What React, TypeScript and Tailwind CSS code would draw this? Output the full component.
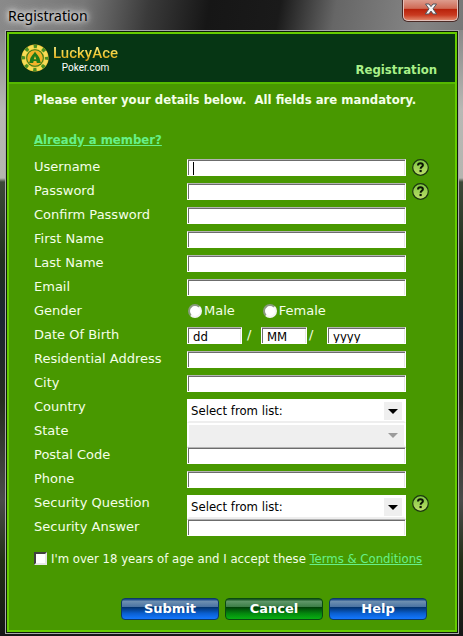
import { useState } from 'react'
import type { ReactNode } from 'react'
import clsx from 'clsx'

const fieldBase = 'block h-[17px] min-w-0 border border-white border-t-[#b4b4b4] bg-white text-black shadow-[inset_1px_1px_0_#6c6c6c,inset_-1px_0_0_#e6e6e6] outline-none'

function HelpButton({ topic }: { topic: string }) {
  return (
    <button type="button" aria-label={`Help: ${topic}`} className="block h-[17px] w-[17px]">
      <svg viewBox="0 0 17 17" className="block h-full w-full">
        <defs>
          <linearGradient id={`help-${topic}`} x1="0" y1="0" x2="0" y2="1">
            <stop offset="0" stopColor="#7cc440" />
            <stop offset="1" stopColor="#bfe06a" />
          </linearGradient>
        </defs>
        <circle cx="8.5" cy="8.5" r="7.8" fill={`url(#help-${topic})`} stroke="#1b3510" strokeWidth="1.2" />
        <path d="M6 6.6C6 4.9 7 4.3 8.5 4.3C10.1 4.3 10.9 5 10.9 6.2C10.9 7.8 8.6 7.8 8.6 9.8" fill="none" stroke="#0a1403" strokeWidth="2" />
        <rect x="7.5" y="10.9" width="2.2" height="2.2" fill="#0a1403" />
      </svg>
    </button>
  )
}

function Row({ label, id, help, children }: { label: string; id?: string; help?: string; children: ReactNode }) {
  return (
    <div className="grid h-6 grid-cols-[153px_1fr_24px]">
      {id ? <label htmlFor={id} className="leading-4">{label}</label> : <span className="leading-4">{label}</span>}
      <div className="min-w-0">{children}</div>
      <div className="flex justify-end pr-px">{help && <HelpButton topic={help} />}</div>
    </div>
  )
}

function TextRow({ label, id, type = 'text', help }: { label: string; id: string; type?: string; help?: string }) {
  return (
    <Row label={label} id={id} help={help}>
      <input id={id} type={type} className={clsx(fieldBase, 'w-full px-1')} />
    </Row>
  )
}

function ListBox({ id, disabled = false }: { id: string; disabled?: boolean }) {
  return (
    <div className="relative">
      <select
        id={id}
        disabled={disabled}
        className={clsx(
          'block h-6 w-full appearance-none border-2 border-white border-b-[#eeeeee] pl-[2px] font-["DejaVu_Sans_Condensed","DejaVu_Sans",sans-serif] text-[13px] leading-5 text-black opacity-100 outline-none',
          disabled ? 'bg-[#efefef]' : 'bg-white'
        )}
      >
        <option>{disabled ? '' : 'Select from list:'}</option>
      </select>
      <span className="pointer-events-none absolute top-[3px] right-1 flex h-[18px] w-[18px] items-center justify-center bg-[#efefef]">
        <svg viewBox="0 0 10 5" className="h-[5px] w-[10px]">
          <path d="M0 0H10L5 5Z" fill={disabled ? '#9b9b9b' : '#000000'} />
        </svg>
      </span>
    </div>
  )
}

function Chip() {
  return (
    <svg viewBox="0 0 28 28" className="h-7 w-7">
      <circle cx="14" cy="14" r="13.6" fill="#e2b32c" />
      <circle cx="14" cy="14" r="11.2" fill="none" stroke="#f6dc55" strokeWidth="3.8" />
      {/* eight green edge marks */}
      <circle cx="14" cy="14" r="11.6" fill="none" stroke="#4b8f22" strokeWidth="3.4" strokeDasharray="3.4 5.711" strokeDashoffset="1.7" />
      <circle cx="14" cy="14" r="8.8" fill="#2c7d1b" />
      <circle cx="14" cy="14" r="7.8" fill="#f3b32a" />
      <path d="M14 7.6C15.2 10.2 19 13 19 16.2L19.8 19H15.9L15.3 17H12.7L12.1 19H8.2L9 16.2C9 13 12.8 10.2 14 7.6Z" fill="#1f7a18" />
      <path d="M14 12L15.2 15.2H12.8Z" fill="#f4c63c" />
    </svg>
  )
}

const buttons = [
  { label: 'Submit', blue: true },
  { label: 'Cancel', blue: false },
  { label: 'Help', blue: true },
]

const textRows = [
  { label: 'Username', id: 'username', help: 'username' },
  { label: 'Password', id: 'password', type: 'password', help: 'password' },
  { label: 'Confirm Password', id: 'confirm', type: 'password' },
  { label: 'First Name', id: 'first-name' },
  { label: 'Last Name', id: 'last-name' },
  { label: 'Email', id: 'email' },
]

const radioClass = 'h-[14px] w-[14px] appearance-none rounded-full border-2 border-t-[#8a9a80] border-l-[#8a9a80] border-r-[#f4f4f4] border-b-[#f4f4f4] bg-white checked:bg-black'
const dateClass = 'px-[5px] pt-[2px] font-["DejaVu_Sans_Condensed","DejaVu_Sans",sans-serif] text-[13px] leading-[13px]'

export default function App() {
  const [accepted, setAccepted] = useState(false)

  return (
    <div className="flex min-h-screen flex-col bg-[linear-gradient(180deg,#777_0px,#b8b8b4_110px,#b5b5b0_178px,#3c4838_182px,#22301f_260px,#1c2533_320px,#262b20_400px,#4a4a4a_500px,#243018_560px,#161616_100%)] font-['DejaVu_Sans',sans-serif] text-[13px] text-[#f4ffe8]">
      {/* title bar */}
      <header className="flex h-[30px] items-start justify-between bg-[linear-gradient(100deg,#8a8a8a_0%,#777_18%,#3a3a3a_32%,#161616_45%,#1a1a1a_60%,#666_72%,#858585_90%,#777_100%)] pr-[5px] pl-2">
        <h1 className="pt-[6px] font-['Noto_Sans','Open_Sans',sans-serif] text-[14px] leading-5 text-black [text-shadow:0_0_4px_#e0e0e0,0_0_6px_#d8d8d8,0_0_9px_#d0d0d0,0_0_12px_#c0c0c0]">Registration</h1>
        <button type="button" aria-label="Close" className="flex h-[21px] w-[55px] items-center justify-center rounded-b-[5px] border border-t-0 border-[#e3c0ba] bg-[linear-gradient(180deg,#dd9c8d_0%,#cf6a55_42%,#b8220b_46%,#c93a20_75%,#e08468_100%)] shadow-[0_0_0_1px_#4a2a26]">
          <svg viewBox="0 0 14 12" className="mb-[2px] h-3 w-[14px]">
            <path d="M1.5 1H5L7 3.6L9 1H12.5L9 5.8L12.7 11H9.1L7 8.1L4.9 11H1.3L5 5.8Z" fill="#f6f6f6" stroke="#51545c" />
          </svg>
        </button>
      </header>

      <main className="mr-1 mb-[2px] ml-[5px] flex flex-1 flex-col border border-[#a9a9a9] bg-[#489800]">
        <div className="flex flex-1 flex-col border border-[#0d1a08]">
          <div className="flex flex-1 flex-col border-2 border-[#66cc00]">
            {/* brand */}
            <div className="flex h-[50px] items-start justify-between border-b-2 border-[#55b800] bg-[#063614] pr-[18px] pl-3">
              <div className="flex gap-1 pt-[10px]">
                <Chip />
                <div className="flex flex-col items-center font-['Roboto',sans-serif]">
                  <span className="bg-[linear-gradient(180deg,#fff8a0,#f5cf3a_55%,#c98d12)] bg-clip-text text-[15px] leading-[18px] font-medium text-transparent">LuckyAce</span>
                  <span className="text-[10px] leading-3 text-white">Poker.com</span>
                </div>
              </div>
              <h2 className="pt-7 font-['DejaVu_Sans_Condensed','DejaVu_Sans',sans-serif] leading-4 font-bold text-[#a8f088]">Registration</h2>
            </div>

            <form onSubmit={(e) => e.preventDefault()} className="px-[25px] pt-2 pb-2">
              <div className="font-['DejaVu_Sans_Condensed','DejaVu_Sans',sans-serif] leading-4 font-bold">
                <p className="whitespace-pre">Please enter your details below.  All fields are mandatory.</p>
                <a href="#login" className="mt-6 block w-fit text-[#66f088] underline">Already a member?</a>
              </div>

              <div className="relative mt-[11px]">
                {textRows.map((row) => <TextRow key={row.id} {...row} />)}
                {/* text caret in the focused field */}
                <span className="absolute top-[3px] left-[159px] h-[13px] w-px bg-black" />

                <Row label="Gender">
                  <div className="flex h-4 items-center gap-[28px] pl-px leading-4">
                    <label className="flex items-center gap-[2px]"><input type="radio" name="gender" className={radioClass} />Male</label>
                    <label className="flex items-center gap-[2px]"><input type="radio" name="gender" className={radioClass} />Female</label>
                  </div>
                </Row>
                <Row label="Date Of Birth">
                  <div className="flex leading-4">
                    <input aria-label="Day" defaultValue="dd" className={clsx(fieldBase, dateClass, 'w-[55px]')} />
                    <span className="w-[19px] pl-[5px]">/</span>
                    <input aria-label="Month" defaultValue="MM" className={clsx(fieldBase, dateClass, 'w-[46px]')} />
                    <span className="w-5 pl-[2px]">/</span>
                    <input aria-label="Year" defaultValue="yyyy" className={clsx(fieldBase, dateClass, 'flex-1')} />
                  </div>
                </Row>
                <TextRow label="Residential Address" id="address" />
                <TextRow label="City" id="city" />
                <Row label="Country" id="country"><ListBox id="country" /></Row>
                <Row label="State" id="state"><ListBox id="state" disabled /></Row>
                <TextRow label="Postal Code" id="postal" />
                <TextRow label="Phone" id="phone" />
                <Row label="Security Question" id="question" help="question"><ListBox id="question" /></Row>
                <TextRow label="Security Answer" id="answer" />
              </div>

              <div className="mt-2 flex h-[15px] items-center gap-1 font-['DejaVu_Sans_Condensed','DejaVu_Sans',sans-serif] leading-4 whitespace-nowrap">
                <input id="accept" type="checkbox" checked={accepted} onChange={(e) => setAccepted(e.target.checked)} className="h-[13px] w-[13px] shrink-0 appearance-none border-2 border-t-[#404040] border-l-[#404040] border-r-[#e8e8e8] border-b-[#e8e8e8] bg-white checked:bg-black" />
                <label htmlFor="accept">I'm over 18 years of age and I accept these <a href="#terms" className="text-[#66f088] underline">Terms &amp; Conditions</a></label>
              </div>

              <div className="mt-8 flex justify-end gap-[6px] pr-[3px]">
                {buttons.map((b) => (
                  <button
                    key={b.label}
                    type={b.label === 'Submit' ? 'submit' : 'button'}
                    className={clsx(
                      'h-[22px] w-[98px] rounded-[4px] border text-[13px] leading-5 font-bold text-white',
                      b.blue
                        ? 'border-[#0c3a66] bg-[linear-gradient(180deg,#0a3a80_0%,#6d8fb0_12%,#4b74a3_38%,#02336f_42%,#0a5fd0_72%,#1478ff_100%)]'
                        : 'border-[#0a4a10] bg-[linear-gradient(180deg,#0a4a18_0%,#5f9668_12%,#3d7f48_38%,#014209_42%,#04860e_72%,#08b012_100%)]'
                    )}
                  >
                    {b.label}
                  </button>
                ))}
              </div>
            </form>
          </div>
        </div>
      </main>
    </div>
  )
}
